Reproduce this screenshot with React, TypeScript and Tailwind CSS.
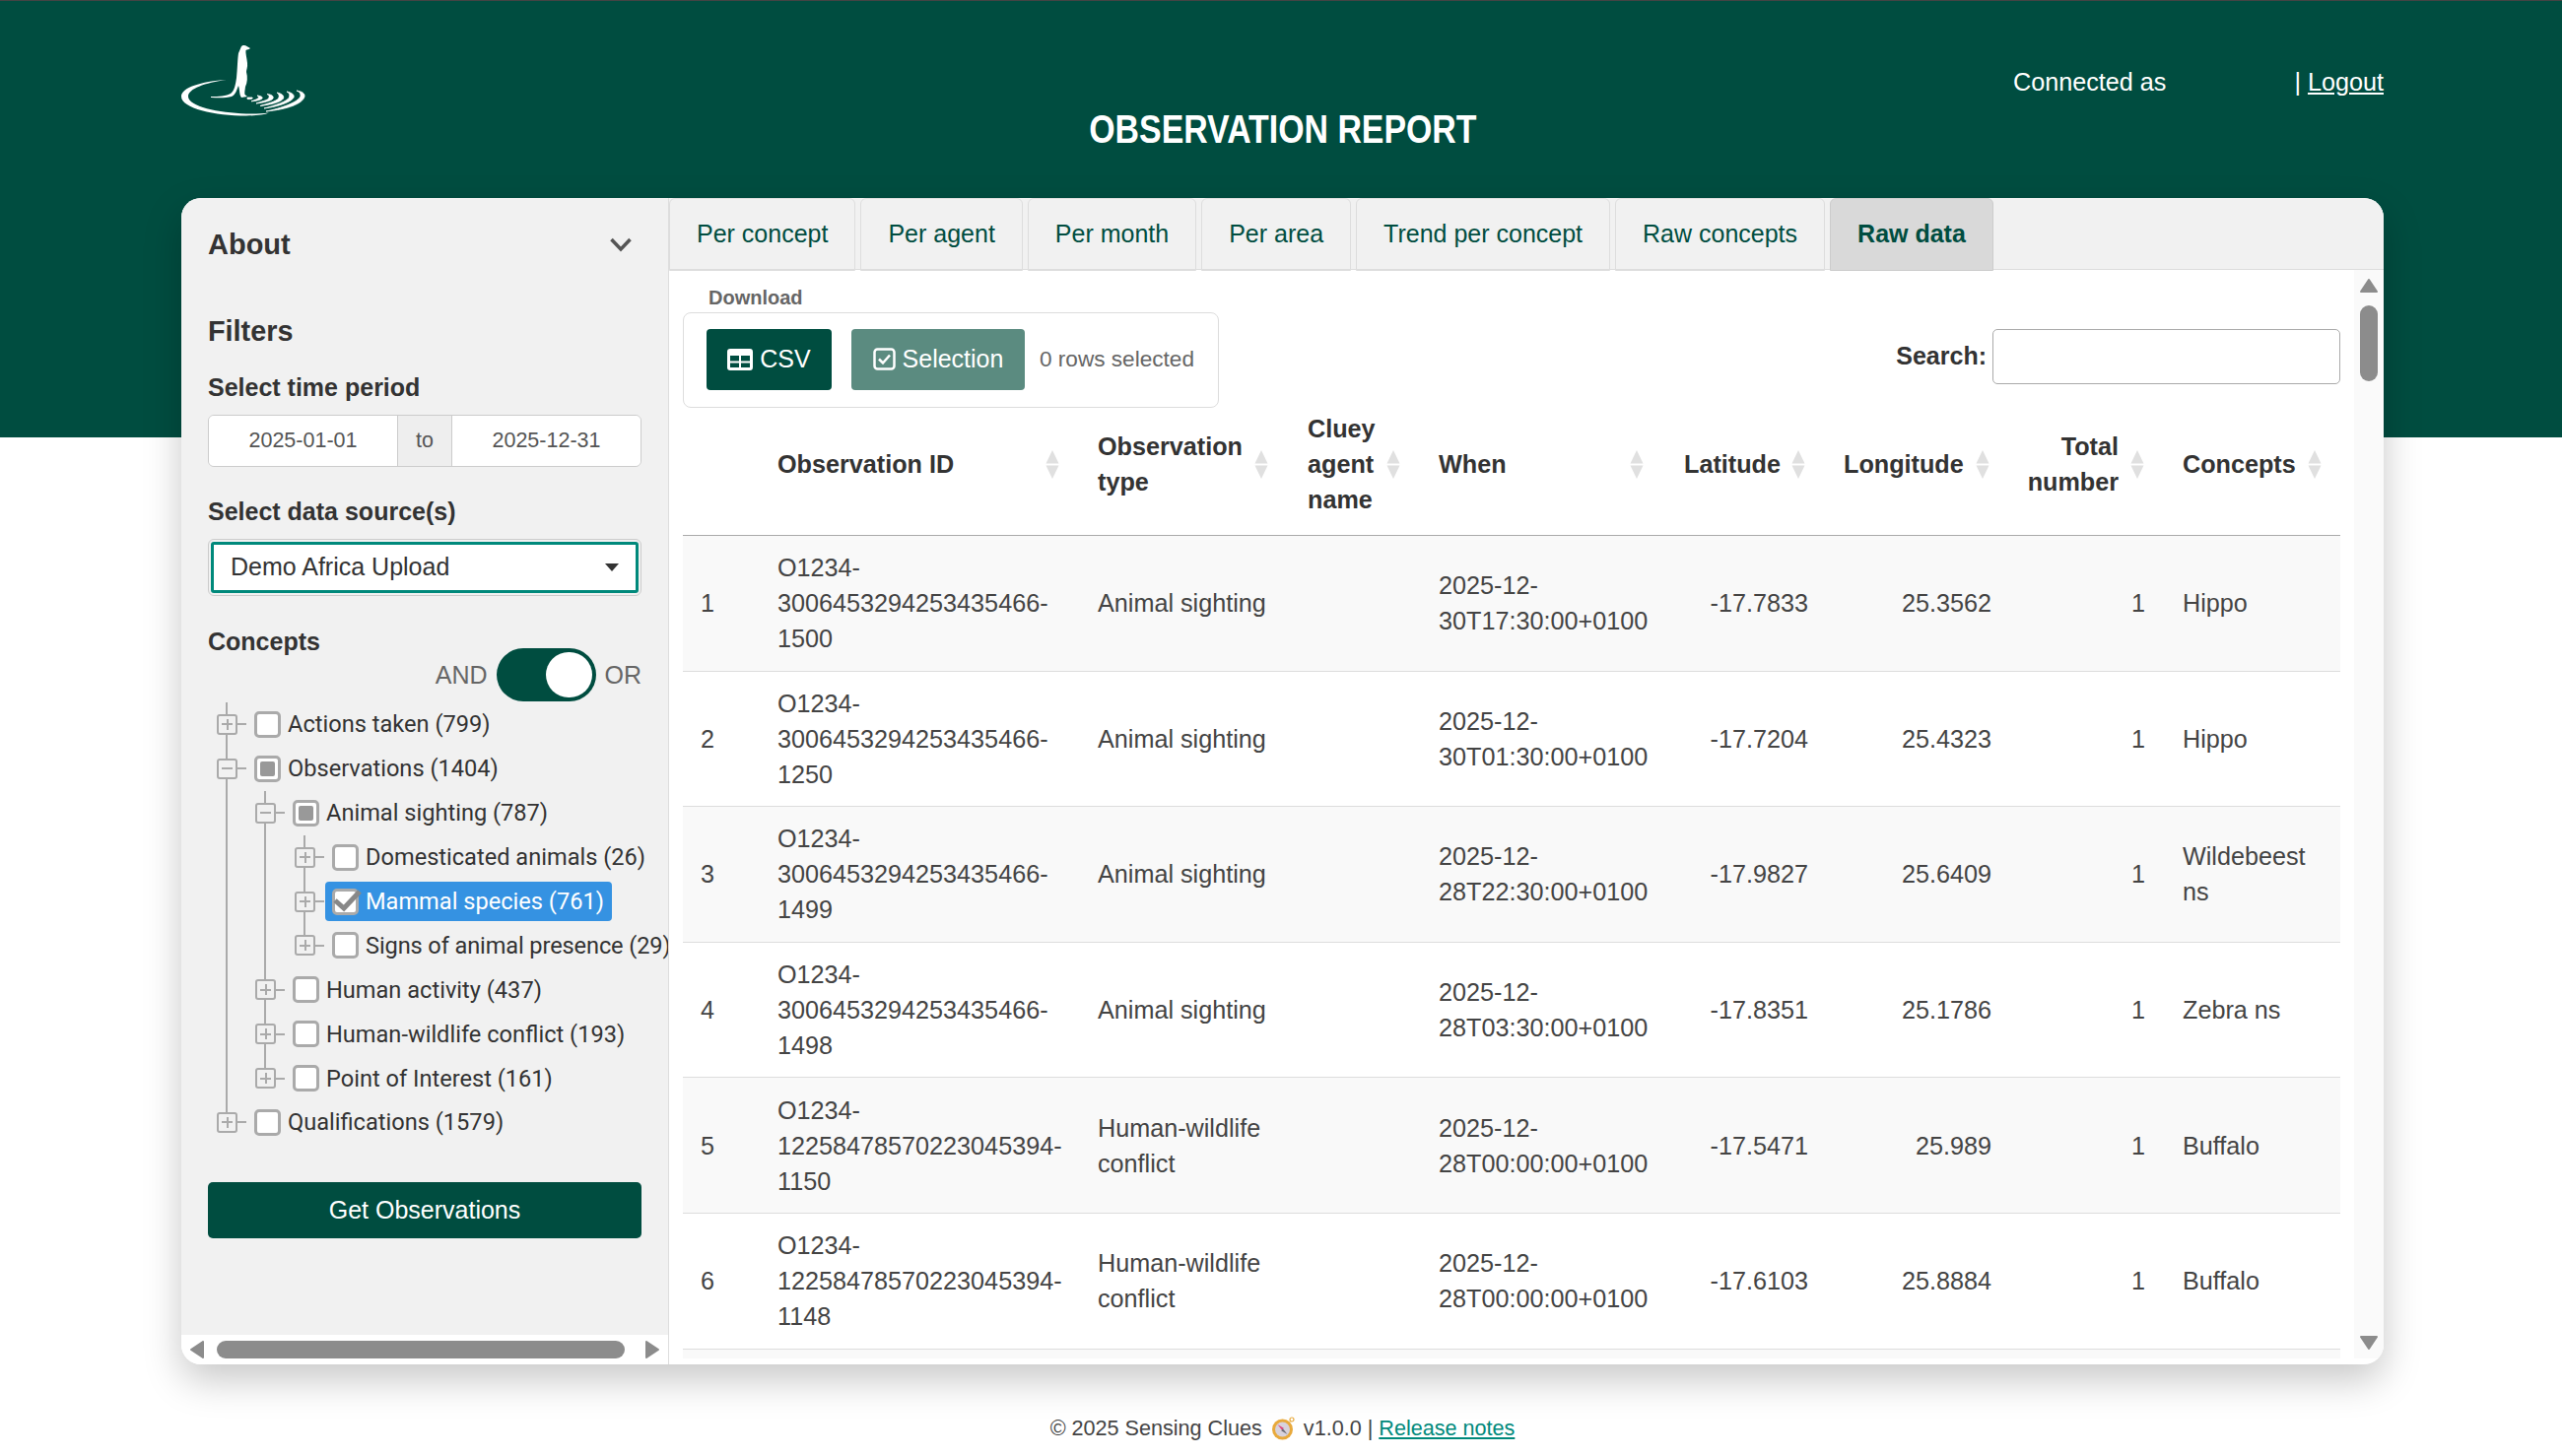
import React from "react";

const tabs = ["Per concept", "Per agent", "Per month", "Per area", "Trend per concept", "Raw concepts"];

const rows = [
  { id: ["O1234-", "3006453294253435466-", "1500"], type: "Animal sighting", when: "30T17:30:00+0100", lat: "-17.7833", lon: "25.3562", concept: "Hippo" },
  { id: ["O1234-", "3006453294253435466-", "1250"], type: "Animal sighting", when: "30T01:30:00+0100", lat: "-17.7204", lon: "25.4323", concept: "Hippo" },
  { id: ["O1234-", "3006453294253435466-", "1499"], type: "Animal sighting", when: "28T22:30:00+0100", lat: "-17.9827", lon: "25.6409", concept: "Wildebeest ns" },
  { id: ["O1234-", "3006453294253435466-", "1498"], type: "Animal sighting", when: "28T03:30:00+0100", lat: "-17.8351", lon: "25.1786", concept: "Zebra ns" },
  { id: ["O1234-", "12258478570223045394-", "1150"], type: "Human-wildlife conflict", when: "28T00:00:00+0100", lat: "-17.5471", lon: "25.989", concept: "Buffalo" },
  { id: ["O1234-", "12258478570223045394-", "1148"], type: "Human-wildlife conflict", when: "28T00:00:00+0100", lat: "-17.6103", lon: "25.8884", concept: "Buffalo" },
];

type Node = {
  label: string;
  level: 0 | 1 | 2;
  open?: boolean;
  state?: "none" | "partial" | "checked";
  last?: boolean;
  tight?: boolean;
  guides?: (0 | 1 | 2)[];
};

const tree: Node[] = [
  { label: "Actions taken (799)", level: 0 },
  { label: "Observations (1404)", level: 0, open: true, state: "partial" },
  { label: "Animal sighting (787)", level: 1, open: true, state: "partial", guides: [0] },
  { label: "Domesticated animals (26)", level: 2, guides: [0, 1] },
  { label: "Mammal species (761)", level: 2, state: "checked", guides: [0, 1] },
  { label: "Signs of animal presence (29)", level: 2, last: true, tight: true, guides: [0, 1] },
  { label: "Human activity (437)", level: 1, guides: [0] },
  { label: "Human-wildlife conflict (193)", level: 1, guides: [0] },
  { label: "Point of Interest (161)", level: 1, last: true, guides: [0] },
  { label: "Qualifications (1579)", level: 0, last: true },
];

const indent = ["pl-[9px]", "pl-[48px]", "pl-[88px]"];
const lineLeft = ["left-[18px]", "left-[57px]", "left-[97px]"];

function Logo() {
  return (
    <svg width="140" height="84" viewBox="0 0 140 84" fill="#fff">
      <path d="M65 7C66 5.5 69 5.5 70.5 7L74 9C73 10 71 10.5 69.5 11C69 14 70.5 19 71 24C71.5 28 70 31 70 33C71.5 38 71 44 69 48C68.5 52 68 54 68.5 56L71 58L65 59C63 57 63.5 52 62 47C60 52 59 56 55 58C50 59.5 43 59.5 34 59L34 58C42 58 50 57.5 54 55C58 52 59 46 60 39C61 30 61 20 62 14Z" />
      <path d="M50 41C24 42.5 4 49 4 58C4 70 38 77.5 70 77.5C80 77.5 88 76.5 93 74.5C85 75.5 78 75.8 70 75.5C42 74.5 11 68 11 58C11 50 28 44 50 41Z" />
      <g stroke="#fff" strokeWidth="0.8">
        <path d="M121 52C127 53 129.5 55 129 58C127.5 65 112 71 90 73C105 70 122 64 125 58C125.5 55 124 53 121 52Z" />
        <path d="M111 53C116 54 119 56 118 59C116 63 104 68 88 70C100 67 111 63 113.5 59C114.5 56 113.5 54 111 53Z" />
        <path d="M101 54C106 55 108.5 57 107.5 60C105 63.5 96 66 84 67.5C92 65 100 63 102.5 60C104 57.5 103 55.5 101 54Z" />
        <path d="M91 55.5C95.5 56 98 57.5 97 60C95 62.5 88 64 80 65C85 63 91 62 92.5 60C94 58 93 56.5 91 55.5Z" />
        <path d="M81 57C85 57.5 87 58.5 86 60C84.5 61.5 80 62.5 75 62.8C78 61.5 81 61 82 59.8C83 58.8 82.5 57.8 81 57Z" />
        <path d="M71 59L76 59C77 60 75 61 71 60.5Z" />
      </g>
    </svg>
  );
}

function SortIcon({ className }: { className: string }) {
  return (
    <svg className={`absolute top-[43px] ${className}`} width="14" height="29" viewBox="0 0 14 29" fill="#e0e0e0">
      <path d="M7 0L13.5 13.5H.5Z" />
      <path d="M.5 15.5H13.5L7 29Z" />
    </svg>
  );
}

function Arrow({ d, w, h }: { d: string; w: number; h: number }) {
  return (
    <svg width={w} height={h} viewBox={`0 0 ${w} ${h}`} fill="#8c8c8c" strokeLinejoin="round" stroke="#8c8c8c" strokeWidth="2">
      <path d={d} />
    </svg>
  );
}

function Expander({ open }: { open?: boolean }) {
  return (
    <span className="relative z-10 flex h-[21px] w-[21px] shrink-0 items-center justify-center rounded-[3px] border-2 border-[#aaa] bg-[#f1f1f1]">
      <span className="absolute h-[2px] w-[11px] bg-[#aaa]" />
      {!open && <span className="absolute h-[11px] w-[2px] bg-[#aaa]" />}
      <span className="absolute left-[19px] h-[2px] w-[9px] bg-[#aaa]" />
    </span>
  );
}

function Checkbox({ state }: { state?: Node["state"] }) {
  return (
    <span className="relative flex h-[27px] w-[27px] shrink-0 items-center justify-center rounded-[5px] border-[3px] border-[#aaa] bg-white">
      {state === "partial" && <span className="h-[15px] w-[15px] rounded-[2px] bg-[#999]" />}
      {state === "checked" && (
        <svg className="absolute left-[-3px] top-[-3px] overflow-visible" width="27" height="27" viewBox="0 0 27 27" fill="none" stroke="#888" strokeWidth="5">
          <path d="M3 12L12 20L28 3" />
        </svg>
      )}
    </span>
  );
}

function TreeRow({ node }: { node: Node }) {
  const selected = node.state === "checked";
  return (
    <div className={`relative flex h-[44.9px] items-center ${indent[node.level]}`}>
      {node.guides?.map((g) => (
        <span key={g} className={`absolute inset-y-0 w-[2px] bg-[#aaa] ${lineLeft[g]}`} />
      ))}
      <span className={`absolute top-0 w-[2px] bg-[#aaa] ${lineLeft[node.level]} ${node.last ? "h-1/2" : "h-full"}`} />
      <Expander open={node.open} />
      <span
        className={`ml-[10px] flex h-[40px] items-center gap-[7px] whitespace-nowrap rounded-[4px] pl-[7px] pr-[8px] ${
          selected ? "bg-[#3592e2] text-white" : "text-[#333]"
        }`}
      >
        <Checkbox state={node.state} />
        <span className={`font-['Roboto',sans-serif] text-[23.6px] leading-[32px] ${node.tight ? "tracking-[-0.12px]" : ""}`}>{node.label}</span>
      </span>
    </div>
  );
}

function Sidebar() {
  return (
    <aside className="flex w-[495px] shrink-0 flex-col overflow-hidden border-r border-[#ddd]">
      <div className="flex-1 overflow-hidden bg-[#f1f1f1] px-[27px] pt-[30px] text-[#333]">
        <div className="flex h-[34px] items-center justify-between">
          <h2 className="text-[29px] font-bold leading-[34px]">About</h2>
          <svg className="mr-[10px]" width="22" height="15" viewBox="0 0 22 15" fill="none" stroke="#555" strokeWidth="3.5">
            <path d="M1.5 2L11 12L20.5 2" />
          </svg>
        </div>
        <h2 className="mt-[54px] text-[28.8px] font-bold leading-[34px]">Filters</h2>
        <label className="mt-[26px] block text-[25px] font-bold leading-[28px]">Select time period</label>
        <div className="mt-[14px] flex h-[53px] overflow-hidden rounded-[6px] border border-[#ccc] text-[21.5px] text-[#555]">
          <div className="flex w-[191px] items-center justify-center bg-white">2025-01-01</div>
          <div className="flex w-[56px] items-center justify-center border-x border-[#ccc] bg-[#eee]">to</div>
          <div className="flex flex-1 items-center justify-center bg-white">2025-12-31</div>
        </div>
        <label className="mt-[31px] block text-[25px] font-bold leading-[28px]">Select data source(s)</label>
        <div className="mt-[14px] flex h-[58px] items-center rounded-[6px] border border-[#ccc] p-[2px]">
          <div className="flex h-full w-full items-center justify-between rounded-[3px] border-[3px] border-[#00897b] bg-white pl-[17px] pr-[15px] text-[25px] text-[#333]">
            <span>Demo Africa Upload</span>
            <svg className="mr-[2px]" width="14" height="8" viewBox="0 0 14 8" fill="#333">
              <path d="M0 0H14L7 8Z" />
            </svg>
          </div>
        </div>
        <h3 className="mt-[32px] text-[25px] font-bold leading-[28px]">Concepts</h3>
        <div className="-mt-[7px] flex h-[54px] items-center justify-end text-[25px] text-[#666]">
          <span className="pt-[2px]">AND</span>
          <span className="ml-[9px] mr-[9px] flex h-[54px] w-[101px] items-center justify-end rounded-full bg-[#004d40] pr-[4px]">
            <span className="h-[46px] w-[47px] rounded-full bg-white" />
          </span>
          <span className="pt-[2px]">OR</span>
        </div>
        <div className="-mr-[27px] mt-[1px] overflow-hidden">
          {tree.map((n) => (
            <TreeRow key={n.label} node={n} />
          ))}
        </div>
        <button className="mt-[38px] h-[57px] w-full rounded-[5px] bg-[#004d40] text-[25px] text-white">Get Observations</button>
      </div>
      <div className="flex h-[30px] shrink-0 items-center bg-white px-[9px]">
        <Arrow w={14} h={18} d="M13 1V17L1 9Z" />
        <span className="ml-[13px] h-[18px] w-[414px] rounded-full bg-[#8c8c8c]" />
        <span className="ml-auto flex">
          <Arrow w={14} h={18} d="M1 1V17L13 9Z" />
        </span>
      </div>
    </aside>
  );
}

function Tabs() {
  return (
    <div className="flex h-[73px] shrink-0 gap-[5px] border-b border-[#ddd] bg-[#f1f1f1]">
      {tabs.map((t) => (
        <div key={t} className="flex h-[74px] items-center rounded-t-[6px] border border-[#ddd] px-[27px] text-[25px] text-[#004d40]">
          {t}
        </div>
      ))}
      <div className="flex h-[74px] items-center rounded-t-[6px] border border-[#ccc] bg-[#d9d9d9] px-[27px] text-[25px] font-bold text-[#004d40]">
        Raw data
      </div>
    </div>
  );
}

function Toolbar() {
  return (
    <div className="flex items-start justify-between">
      <div className="pt-[16px]">
        <div className="pl-[26px] text-[20px] font-bold leading-[24px] text-[#666]">Download</div>
        <div className="mt-[3px] flex h-[97px] items-center gap-[20px] rounded-[8px] border border-[#ddd] pb-[2px] pl-[23px] pr-[24px] text-[25px] text-white">
          <button className="flex h-[62px] w-[127px] items-center justify-center gap-[7px] rounded-[4px] bg-[#004d40]">
            <svg width="26" height="22" viewBox="0 0 26 22">
              <rect width="26" height="22" rx="3" fill="#fff" />
              <path d="M3 7H12V12.5H3ZM14 7H23V12.5H14ZM3 14.5H12V19H3ZM14 14.5H23V19H14Z" fill="#004d40" />
            </svg>
            CSV
          </button>
          <button className="flex h-[62px] w-[176px] items-center justify-center gap-[7px] rounded-[4px] bg-[#5b8b80]">
            <svg width="23" height="23" viewBox="0 0 23 23" fill="none" stroke="#fff" strokeWidth="2.5">
              <rect x="1.5" y="1.5" width="20" height="20" rx="3" />
              <path d="M6 11.5L10 15.5L17 7.5" />
            </svg>
            Selection
          </button>
          <span className="-ml-[5px] text-[22.6px] text-[#666]">0 rows selected</span>
        </div>
      </div>
      <div className="flex items-center gap-[6px] pt-[60px]">
        <label className="text-[25px] font-bold text-[#333]">Search:</label>
        <input className="h-[56px] w-[353px] rounded-[5px] border border-[#aaa] bg-white" />
      </div>
    </div>
  );
}

function DataTable() {
  const td = "py-[14.3px] align-middle";
  return (
    <table className="w-full table-fixed border-collapse text-[25.2px] leading-[36px] text-[#444]">
      <colgroup>
        <col className="w-[78px]" />
        <col className="w-[325px]" />
        <col className="w-[213px]" />
        <col className="w-[133px]" />
        <col className="w-[249px]" />
        <col className="w-[162px]" />
        <col className="w-[186px]" />
        <col className="w-[158px]" />
        <col className="w-[178px]" />
      </colgroup>
      <thead>
        <tr className="border-b border-[#aaa] text-[#333]">
          <th className="pb-[18px] pt-[3px]" />
          <th className="relative pb-[18px] pl-[18px] pr-[37px] pt-[3px] text-left font-bold">
            Observation ID
            <SortIcon className="right-[21px]" />
          </th>
          <th className="relative pb-[18px] pl-[18px] pr-[37px] pt-[3px] text-left font-bold">
            Observation type
            <SortIcon className="right-[22px]" />
          </th>
          <th className="relative pb-[18px] pl-[18px] pr-[37px] pt-[3px] text-left font-bold">
            Cluey agent name
            <SortIcon className="right-[21px]" />
          </th>
          <th className="relative pb-[18px] pl-[18px] pr-[37px] pt-[3px] text-left font-bold">
            When
            <SortIcon className="right-[23px]" />
          </th>
          <th className="relative pb-[18px] pl-[18px] pr-[37px] pt-[3px] text-left font-bold">
            Latitude
            <SortIcon className="right-[21px]" />
          </th>
          <th className="relative pb-[18px] pl-[18px] pr-[37px] pt-[3px] text-left font-bold">
            Longitude
            <SortIcon className="right-[20px]" />
          </th>
          <th className="relative pb-[18px] pl-[18px] pr-[47px] pt-[3px] text-right font-bold">
            Total number
            <SortIcon className="right-[21px]" />
          </th>
          <th className="relative pb-[18px] pl-[18px] pr-[37px] pt-[3px] text-left font-bold">
            Concepts
            <SortIcon className="right-[19px]" />
          </th>
        </tr>
      </thead>
      <tbody>
        {rows.map((r, i) => (
          <tr key={r.id[2]} className={`border-b border-[#ddd] ${i % 2 === 0 ? "bg-[#f9f9f9]" : "bg-white"}`}>
            <td className={`${td} pl-[18px]`}>{i + 1}</td>
            <td className={`${td} pl-[18px]`}>
              {r.id.map((line) => (
                <div key={line}>{line}</div>
              ))}
            </td>
            <td className={`${td} px-[18px]`}>{r.type}</td>
            <td className={td} />
            <td className={`${td} pl-[18px]`}>
              <div>2025-12-</div>
              <div>{r.when}</div>
            </td>
            <td className={`${td} pr-[18px] text-right`}>{r.lat}</td>
            <td className={`${td} pr-[18px] text-right`}>{r.lon}</td>
            <td className={`${td} pr-[20px] text-right`}>1</td>
            <td className={`${td} px-[18px]`}>{r.concept}</td>
          </tr>
        ))}
        <tr className="bg-[#f9f9f9]">
          <td colSpan={9} className="h-[137px]" />
        </tr>
      </tbody>
    </table>
  );
}

function Compass() {
  return (
    <svg width="24" height="24" viewBox="0 0 24 24">
      <circle cx="21" cy="3" r="2" fill="none" stroke="#e8a93c" strokeWidth="1.2" />
      <circle cx="11.5" cy="13" r="10.5" fill="#e8a93c" />
      <circle cx="11.5" cy="13" r="7.5" fill="#d8d2dc" />
      <path d="M6.5 8L12.8 11.8L11 13.8Z" fill="#e0457b" />
      <path d="M16.5 18L10.2 14.2L12 12.2Z" fill="#6b6b75" />
    </svg>
  );
}

export default function App() {
  return (
    <div className="min-h-[1478px] overflow-hidden border-t border-[#444] bg-[linear-gradient(#004d40_443px,#fff_443px)] pl-[184px] pr-[181px] font-['Liberation_Sans',Arial,sans-serif]">
      <header className="grid h-[200px] grid-cols-[1fr_auto_1fr] items-start text-white">
        <div className="-ml-[4px] mt-[39px]">
          <Logo />
        </div>
        <h1 className="mt-[106px] flex h-[48px] w-[393px] justify-center whitespace-nowrap text-[40.8px] font-bold leading-[48px]">
          <span className="inline-block shrink-0 scale-x-[0.83]">OBSERVATION REPORT</span>
        </h1>
        <div className="mt-[64px] flex justify-end text-[25.2px] leading-[36px]">
          <span>Connected as</span>
          <span className="ml-[130px]">
            | <a className="underline">Logout</a>
          </span>
        </div>
      </header>

      <main className="flex h-[1184px] overflow-hidden rounded-[20px] bg-white shadow-[0_16px_38px_rgba(0,0,0,0.22)]">
        <Sidebar />
        <section className="flex min-w-0 flex-1 flex-col">
          <Tabs />
          <div className="flex min-h-0 flex-1 pb-[6px]">
            <div className="min-w-0 flex-1 overflow-hidden px-[14px]">
              <Toolbar />
              <DataTable />
            </div>
            <div className="flex w-[30px] shrink-0 flex-col items-center bg-[#fafafa] pb-[9px] pt-[9px]">
              <Arrow w={18} h={14} d="M9 1L17 13H1Z" />
              <span className="mt-[13px] h-[77px] w-[18px] rounded-full bg-[#8c8c8c]" />
              <span className="mt-auto flex">
                <Arrow w={18} h={14} d="M1 1H17L9 13Z" />
              </span>
            </div>
          </div>
        </section>
      </main>

      <footer className="mt-[49px] flex h-[32px] items-center justify-center text-[21.6px] text-[#444]">
        <span>© 2025 Sensing Clues</span>
        <span className="mx-[9px] flex">
          <Compass />
        </span>
        <span>v1.0.0 |&nbsp;</span>
        <a className="text-[#00897b] underline">Release notes</a>
      </footer>
    </div>
  );
}
